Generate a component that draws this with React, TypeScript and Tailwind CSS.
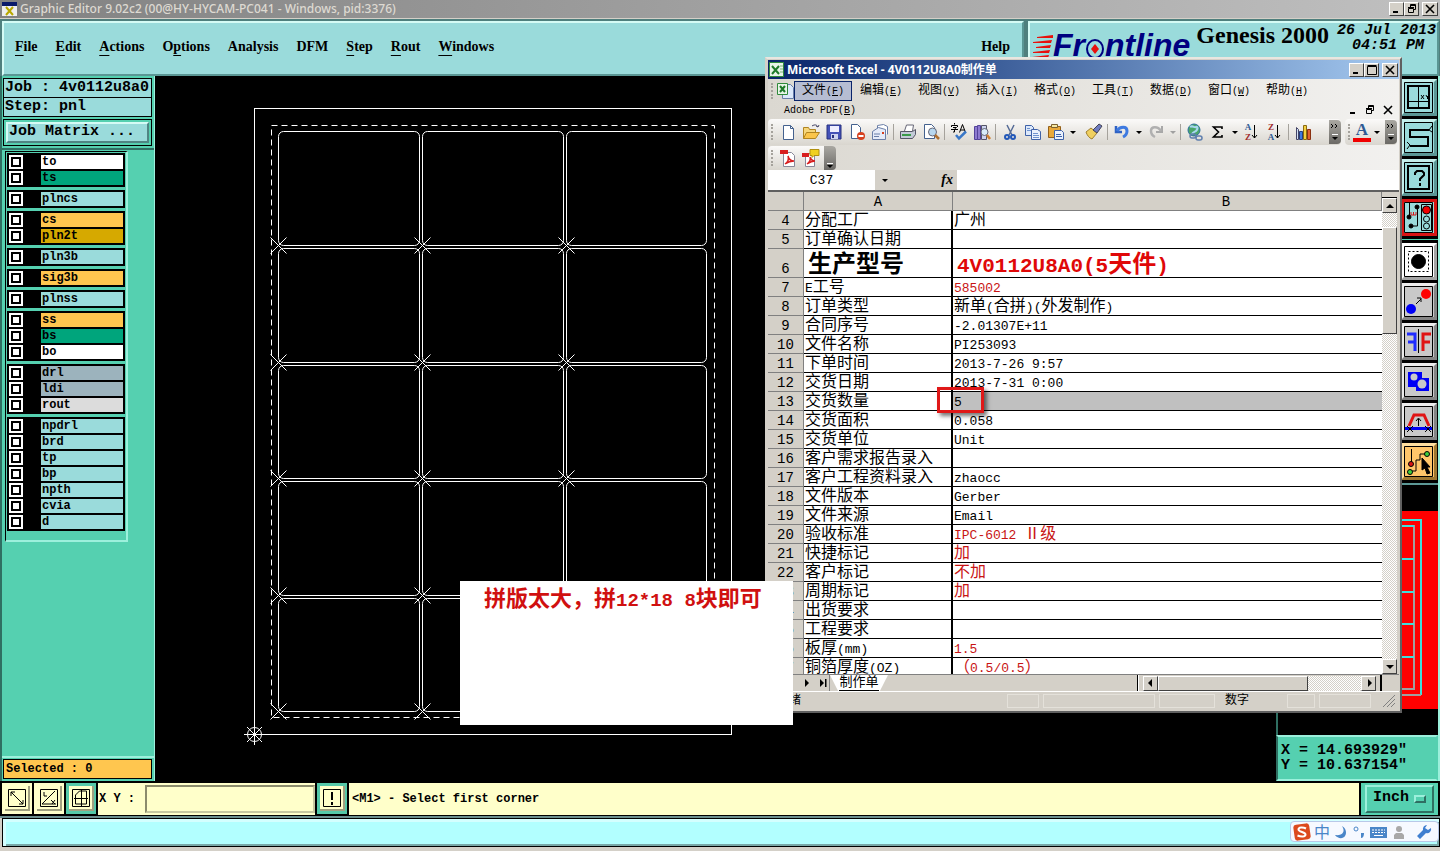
import type { ReactNode } from 'react';
import clsx from 'clsx';

const mono = "font-['Liberation_Mono','Noto_Sans_CJK_SC',monospace]";
const sans = "font-['Noto_Sans','Noto_Sans_CJK_SC',sans-serif]";
const serif = "font-['Liberation_Serif',serif]";

const winButton =
  'flex items-center justify-center border border-t-white border-l-white border-r-[#404040] border-b-[#404040] bg-[#d4d0c8] text-black';
const dither = 'bg-[repeating-conic-gradient(#fff_0_25%,#d4d0c8_0_50%)] bg-[length:2px_2px]';

/* Latin runs are set smaller so that they take half the width of a CJK glyph. */
function Mixed({ text, latin }: { text: string; latin: string }) {
  return (
    <>
      {text.split(/([\x20-\x7e]+)/).map((part, i) =>
        i % 2 === 1 ? (
          <span key={i} className={clsx('leading-2 whitespace-pre', latin)}>
            {part}
          </span>
        ) : (
          part
        ),
      )}
    </>
  );
}

function MinIcon() {
  return (
    <svg width="10" height="10" viewBox="0 0 10 10">
      <path d="M1 8h5" stroke="#000" strokeWidth="2" />
    </svg>
  );
}

function MaxIcon() {
  return (
    <svg width="10" height="10" viewBox="0 0 10 10" fill="none" stroke="#000">
      <path d="M.5 1.5h9v8h-9zM.5 .5h9" />
    </svg>
  );
}

function RestoreIcon() {
  return (
    <svg width="10" height="10" viewBox="0 0 10 10" fill="none" stroke="#000">
      <path d="M3.5 3V.5h5v5H7M3 1.5h6M1.5 4.5h5v4h-5zM1 3.5h6" />
    </svg>
  );
}

function CloseIcon() {
  return (
    <svg width="10" height="10" viewBox="0 0 10 10" fill="none" stroke="#000" strokeWidth="1.6">
      <path d="M1 1l8 8M9 1L1 9" />
    </svg>
  );
}

function WindowButtons({ middle }: { middle: ReactNode }) {
  return (
    <div className="flex h-3.5 shrink-0">
      <button type="button" aria-label="Minimize" className={clsx(winButton, 'w-[15px]')}>
        <MinIcon />
      </button>
      <button type="button" aria-label="Maximize" className={clsx(winButton, 'w-[15px]')}>
        {middle}
      </button>
      <button type="button" aria-label="Close" className={clsx(winButton, 'ml-[3px] w-4')}>
        <CloseIcon />
      </button>
    </div>
  );
}

function TitleBar() {
  return (
    <header className="flex h-[19px] shrink-0 items-center gap-[3px] border-b border-[#d4d0c8] bg-linear-to-r from-[#828282] to-[#c0c0c0] pr-0.5 pl-0.5">
      <svg width="15" height="14" viewBox="0 0 15 14" className="shrink-0">
        <path d="M0 0h15v14H0z" fill="#eee" />
        <path d="M0 0h15v4H0z" fill="#0a1a6a" />
        <path d="M4 5l7 8M11 5l-7 8" stroke="#b8a800" strokeWidth="2" />
      </svg>
      <h1 className={clsx(sans, 'flex-1 text-[12px] leading-[18px] font-medium text-[#dedad2]')}>
        Graphic Editor 9.02c2 (00@HY-HYCAM-PC041 - Windows, pid:3376)
      </h1>
      <WindowButtons middle={<RestoreIcon />} />
    </header>
  );
}

const mainMenu = [
  ['', 'F', 'ile'],
  ['', 'E', 'dit'],
  ['', 'A', 'ctions'],
  ['O', 'p', 'tions'],
  ['Analysis', '', ''],
  ['DFM', '', ''],
  ['', 'S', 'tep'],
  ['', 'R', 'out'],
  ['', 'W', 'indows'],
];

const tealBevel = 'border-2 border-t-[#d5fbf5] border-l-[#d5fbf5] border-r-[#5a9694] border-b-[#5a9694]';

function FrontlineLogo() {
  return (
    <div className="flex h-10 shrink-0 items-start overflow-hidden pt-1" aria-label="Frontline">
      <svg width="21" height="36" viewBox="0 0 21 36" fill="#e8100c">
        <path d="M5 10l17-2-1 3-16 0zM1 15l19-2-1 3-18 0zM4 20l15-2-1 3-14 0zM1 25l17-2-1 3-16 0zM0 30l17-2-1 3-16 0z" />
      </svg>
      <span className="font-['Liberation_Sans',sans-serif] text-[32px] leading-9 font-bold text-[#000080] italic">
        Fr
      </span>
      <svg width="20" height="36" viewBox="0 0 20 36">
        <ellipse cx="10" cy="22" rx="8" ry="9" fill="none" stroke="#000080" strokeWidth="2" />
        <path d="M10 17l4 5-4 5-4-5z" fill="#e8100c" />
      </svg>
      <span className="font-['Liberation_Sans',sans-serif] text-[32px] leading-9 font-bold text-[#000080] italic">
        ntline
      </span>
    </div>
  );
}

function MenuRow() {
  return (
    <div className="flex h-[57px] shrink-0 bg-[#4f7f7d] pt-[2px] pr-px pl-0.5">
      <nav
        className={clsx(
          serif,
          tealBevel,
          'flex flex-1 items-center gap-[18px] bg-[#9adbdb] pb-1 pl-[11px] text-[14px] font-bold',
        )}>
        {mainMenu.map(([before, key, after]) => (
          <button key={before + key + after} type="button">
            {before}
            <u className="underline-offset-4">{key}</u>
            {after}
          </button>
        ))}
        <button type="button" className="mr-3 ml-auto">
          Help
        </button>
      </nav>
      <div className={clsx(tealBevel, 'ml-1 flex w-[411px] items-start bg-[#9adbdb] pl-0.5')}>
        <FrontlineLogo />
        <span className={clsx(serif, 'ml-1.5 text-2xl leading-6 font-bold whitespace-nowrap')}>Genesis 2000</span>
        <div
          className={clsx(
            mono,
            'mr-px ml-auto text-right text-[15px] leading-[15px] font-bold whitespace-nowrap italic',
          )}>
          <p>26 Jul 2013</p>
          <p className="pr-3">04:51 PM</p>
        </div>
      </div>
    </div>
  );
}

const cyan = 'bg-[#9adbdb]';
const layerGroups = [
  [
    { name: 'to', color: 'bg-white' },
    { name: 'ts', color: 'bg-[#00a57c]' },
  ],
  [{ name: 'plncs', color: cyan }],
  [
    { name: 'cs', color: 'bg-[#ffc64f]' },
    { name: 'pln2t', color: 'bg-[#d6a900]' },
  ],
  [{ name: 'pln3b', color: cyan }],
  [{ name: 'sig3b', color: 'bg-[#ffc64f]' }],
  [{ name: 'plnss', color: cyan }],
  [
    { name: 'ss', color: 'bg-[#ffc64f]' },
    { name: 'bs', color: 'bg-[#00a57c]' },
    { name: 'bo', color: 'bg-white' },
  ],
  [
    { name: 'drl', color: 'bg-[#9cb3bd]' },
    { name: 'ldi', color: 'bg-[#9cb3bd]' },
    { name: 'rout', color: 'bg-[#dcdcdc]' },
  ],
  ['npdrl', 'brd', 'tp', 'bp', 'npth', 'cvia', 'd'].map((name) => ({ name, color: cyan })),
];

function LayerList() {
  return (
    <div className="mt-px ml-[3px] flex w-[123px] flex-col gap-[3px] border border-r-2 border-b-2 border-t-black border-r-[#9cf0dc] border-b-[#9cf0dc] border-l-black pt-px pr-px pb-[9px] pl-px">
      {layerGroups.map((group) => (
        <div key={group[0].name} className="bg-black p-px">
          {group.map((layer) => (
            <label key={layer.name} className="flex h-4 items-stretch border-y border-black">
              <span className="ml-px flex w-3.5 items-center justify-center bg-white">
                <input type="checkbox" className="size-[10px] appearance-none border-2 border-black bg-white" />
              </span>
              <span className={clsx('mr-px ml-[18px] flex-1 pl-px text-[12px] leading-[14px] font-bold', layer.color)}>
                {layer.name}
              </span>
            </label>
          ))}
        </div>
      ))}
    </div>
  );
}

function LayerPanel() {
  return (
    <aside
      className={clsx(
        mono,
        'flex w-[155px] shrink-0 flex-col border-r border-l-2 border-r-[#9cf0dc] border-l-[#2f6f62] bg-[#55d0b0] pt-0.5',
      )}>
      <div className="mr-0.5 ml-px border border-black bg-[#9adbdb] text-[15px] leading-[18px] font-bold whitespace-nowrap">
        <p className="border-b border-black pl-px">Job : 4v0112u8a0</p>
        <p className="pl-px">Step: pnl</p>
      </div>
      <div className="mt-0.5 mr-0.5 ml-px border border-black p-[2px]">
        <button
          type="button"
          className="flex h-[21px] w-full items-center border-2 border-t-[#d5fbf5] border-r-[#4f8583] border-b-[#4f8583] border-l-[#d5fbf5] bg-[#9adbdb] pl-px text-[15px] font-bold">
          Job Matrix ...
        </button>
      </div>
      <div className="mt-0.5 flex-1 border-t-2 border-b-2 border-t-[#2f6f62] border-b-[#9cf0dc]">
        <LayerList />
      </div>
      <p className="mt-px mr-0.5 mb-0.5 ml-px border border-black bg-[#ffc64f] px-0.5 text-[12px] leading-[18px] font-bold">
        Selected : 0
      </p>
    </aside>
  );
}

const boardCols = [278.5, 422.5, 566.5];
const boardRows = [131.5, 248.5, 365.5, 481.5, 598.5];
const rowBottoms = [245.5, 362.5, 478.5, 595.5, 711.5];

function BoardDrawing() {
  return (
    <svg width="600" height="690" viewBox="155 76 600 690" fill="none" stroke="#fff" className="block">
      <rect x="254.5" y="108.5" width="477" height="626" />
      <rect x="271.5" y="125.5" width="443" height="592" strokeDasharray="6 4" />
      {boardRows.map((y, r) =>
        boardCols.map((x) => (
          <rect key={`${x}-${y}`} x={x} y={y} width={x === 566.5 ? 140 : 141} height={rowBottoms[r] - y} rx="5" />
        )),
      )}
      {rowBottoms.map((y) =>
        boardCols.map((x) => (
          <path key={`${x}-${y}`} d={`M${x - 8} ${y - 8}l16 16M${x + 8} ${y - 8}l-16 16`} />
        )),
      )}
      <circle cx="254.5" cy="734.5" r="7" />
      <path d="M244 734.5h21M254.5 724v21M247 727l15 15M262 727l-15 15" />
    </svg>
  );
}

function Tool({ label, tone, children }: { label: string; tone: string; children: ReactNode }) {
  return (
    <button
      type="button"
      aria-label={label}
      className={clsx('mb-[3px] flex h-[37px] w-9 items-center justify-center border-[3px]', tone)}>
      <svg width="30" height="31" viewBox="0 0 30 31" fill="none" stroke="#000" className="shrink-0">
        {children}
      </svg>
    </button>
  );
}

const toolTeal = 'bg-[#9adbdb] border-t-[#c4efec] border-l-[#c4efec] border-r-[#5c9896] border-b-[#5c9896]';
const toolGray = 'bg-[#c9c9c9] border-t-[#ececec] border-l-[#ececec] border-r-[#858585] border-b-[#858585]';
const toolRed = 'bg-[#9adbdb] border-[#d81414]';
const toolWhite = 'bg-white border-t-white border-l-white border-r-[#a5a5a5] border-b-[#a5a5a5]';
const toolAmber = 'bg-[#ffc66a] border-t-[#ffdf9f] border-l-[#ffdf9f] border-r-[#a07830] border-b-[#a07830]';

function ToolColumn() {
  return (
    <div className="flex w-[38px] flex-col self-end bg-black pt-[3px] pl-px">
      <Tool label="Coordinates" tone={toolTeal}>
        <path d="M.5.5h28v30H.5z" />
        <path d="M4 4h21v22H4z" strokeWidth="2" />
        <path d="M14.5 4v22M4 19.5h21M17 13l3 4M20 13l-3 4M22 13l1 2 2-2M23.5 15v2" />
      </Tool>
      <Tool label="Trace" tone={toolTeal}>
        <path d="M.5.5h28v30H.5zM28 4l-3 4 3 2M3 20l3 3-3 4" />
        <path d="M25 8H6v7h18v9H6" strokeWidth="2" />
      </Tool>
      <Tool label="Help" tone={toolTeal}>
        <path d="M.5.5h28v30H.5z" />
        <path d="M4 4h21v23H4zM11 13v-2l2-2h5l2 2v2l-4 4v2M16 21v3" strokeWidth="2" />
      </Tool>
      <Tool label="Net state" tone={toolRed}>
        <path d="M.5.5h28v30H.5z" />
        <path d="M5.500 1v14M13.500 5v19H8M17.500 2.500h10v26h-10z" />
        <g fill="#000">
          <circle cx="5" cy="15" r="2" />
          <circle cx="13" cy="5" r="2" />
          <circle cx="7" cy="24" r="2" />
        </g>
        <path d="M7 13h5M7 13v-3M9.500 13v-3M12 13v-3" stroke="#d81414" />
        <circle cx="22.500" cy="8" r="4" fill="#f00000" />
        <circle cx="22.500" cy="17" r="3" />
        <circle cx="22.500" cy="24" r="3" />
      </Tool>
      <div className="mb-[3px] h-px bg-[#55d0b0]" />
      <Tool label="Pad" tone={toolWhite}>
        <path d="M.5.5h28v30H.5z" />
        <path d="M4.500 5.500h20v20h-20z" strokeDasharray="2 2" />
        <circle cx="14.500" cy="15.500" r="7" fill="#000" />
      </Tool>
      <Tool label="Move" tone={toolGray}>
        <path d="M.5.5h28v30H.5zM12 18l5-5M17 16v-4h-4" />
        <circle cx="22" cy="8" r="5" fill="#f00" stroke="none" />
        <circle cx="7" cy="23" r="5" fill="#0000f5" stroke="none" />
      </Tool>
      <Tool label="Mirror" tone={toolGray}>
        <path d="M.5.5h28v30H.5zM14.500 3v24" />
        <path d="M3 8h8v17M4 16h7" stroke="#1f2bff" strokeWidth="3" />
        <path d="M27 8h-8v17M26 16h-7" stroke="#e01414" strokeWidth="3" />
      </Tool>
      <Tool label="Contour" tone={toolGray}>
        <path d="M.5.5h28v30H.5z" />
        <path d="M4 6h14v6h7v13H12v-4H4z" fill="#0000f5" stroke="none" />
        <circle cx="10" cy="11" r="3.500" fill="#c9c9c9" stroke="none" />
        <circle cx="18" cy="18" r="4.500" fill="#c9c9c9" stroke="none" />
      </Tool>
      <Tool label="Reshape" tone={toolGray}>
        <path d="M.5.5h28v30H.5z" />
        <path d="M1 22.500h27" stroke="#0000f5" strokeWidth="3" />
        <path d="M5 20l5-11h10l5 11" stroke="#e01414" strokeWidth="3" />
        <path d="M14.500 20v-7M12 15l2.500-3 2.500 3M3 20l6 6M9 20l-6 6M21 20l6 6M27 20l-6 6" />
      </Tool>
      <Tool label="Select net" tone={toolAmber}>
        <path d="M.5.5h28v30H.5zM7.500 3v16M6 25h6v-11h4V8h6" />
        <circle cx="7" cy="18" r="2.500" fill="#d81414" />
        <circle cx="6" cy="26" r="2.500" fill="#3ecf3e" />
        <circle cx="23" cy="8" r="2.500" fill="#3ecf3e" />
        <path d="M18 12l8 9h-3l3 6-3 1-2-6-3 2z" fill="#000" />
      </Tool>
      <div className="h-0.5 bg-[#5c9896]" />
    </div>
  );
}

function Overview() {
  return (
    <div className="flex flex-1 flex-col justify-end border-l-2 border-[#2f6f62] bg-black pb-[26px]">
      <svg
        width="100%"
        height="198"
        viewBox="0 0 158 198"
        preserveAspectRatio="xMaxYMin meet"
        className="bg-[#f00]">
        <g fill="none" strokeWidth="2">
          <path d="M20 9h121v175" stroke="#3fe0dc" />
          <path d="M141 184H20" stroke="#a0a0a0" />
          <path d="M20 15h114v163H20" stroke="#a0a0a0" />
          <path d="M20 15h114M20 48h114M20 81h114M20 113h114M20 146h114" stroke="#3fe0dc" />
        </g>
      </svg>
    </div>
  );
}

function RightPanel() {
  return (
    <aside className="flex w-[164px] shrink-0 flex-col border-r-2 border-[#9cf0dc]">
      <ToolColumn />
      <Overview />
      <div
        className={clsx(
          mono,
          'border-2 border-t-[#9cf0dc] border-r-[#55d0b0] border-b-[#9cf0dc] border-l-[#2f6f62] bg-[#55d0b0] px-[3px] pt-1.5 pb-1.5 text-[15px] leading-[15px] font-bold',
        )}>
        <p>X = 14.693929"</p>
        <p>Y = 10.637154"</p>
      </div>
    </aside>
  );
}

function PromptButton({ label, active, children }: { label: string; active?: boolean; children: ReactNode }) {
  return (
    <button
      type="button"
      aria-label={label}
      className={clsx('flex h-[31px] w-[30px] items-center justify-center', active ? 'bg-[#55c8a8]' : 'bg-[#ffffca]')}>
      <svg width="25" height="25" viewBox="0 0 25 25" fill="none" stroke="#000">
        <path d="M0 0h25v25H0z" fill="#ffffca" stroke="none" />
        <path d="M24 0v24H0" stroke="#a0a080" strokeWidth="2" />
        <path d="M3.500 3.500h17v17h-17z" />
        {children}
      </svg>
    </button>
  );
}

function PromptRow() {
  return (
    <form
      className={clsx(
        mono,
        'flex h-[35px] shrink-0 items-center gap-0.5 bg-black pt-px pr-0.5 pb-px pl-0.5 text-[12px] font-bold',
      )}>
      <PromptButton label="Stretch">
        <path d="M6 6l12 12M6 10V6h4M18 14v4h-4" />
      </PromptButton>
      <PromptButton label="Angle">
        <path d="M5 18L18 5M5 18h14M7 6v4h3M14 14l4 4M15 18l3-4" />
      </PromptButton>
      <PromptButton label="Grid" active>
        <path d="M6.500 18V9l4-4h7v13zM12.500 4v16M5 12.500h14" />
      </PromptButton>
      <div className="flex h-8 items-center bg-[#ffffca] pl-px">
        <label htmlFor="coords" className="w-[46px]">
          X Y :
        </label>
        <input
          id="coords"
          className="h-[28px] w-[170px] border-2 border-t-[#8c8c6c] border-r-[#c8c8a0] border-b-[#c8c8a0] border-l-[#8c8c6c] bg-[#ffffca] px-1"
        />
      </div>
      <PromptButton label="Alert" active>
        <path d="M12 6v8M12 16v3" strokeWidth="2" />
      </PromptButton>
      <output className="flex h-8 flex-1 items-center bg-[#ffffca] pl-[3px]">{'<M1> - Select first corner'}</output>
      <div className="flex h-8 w-[77px] items-center justify-center bg-[#55d0b0]">
        <button
          type="button"
          className="flex h-[28px] w-[69px] items-center justify-between border-2 border-t-[#9cf0dc] border-r-[#2f6f62] border-b-[#2f6f62] border-l-[#9cf0dc] px-1.5 text-[15px]">
          Inch
          <span className="h-2 w-3 border-2 border-t-[#9cf0dc] border-r-[#2f6f62] border-b-[#2f6f62] border-l-[#9cf0dc]" />
        </button>
      </div>
    </form>
  );
}

function InputTray() {
  return (
    <div className="flex h-[21px] items-center gap-[3px] rounded-sm border border-[#b8c8e8] bg-[#f6f9ff] pr-1.5 pl-0.5 text-[#4a86c8]">
      <svg width="18" height="18" viewBox="0 0 18 18">
        <rect x="1" y="1" width="16" height="16" rx="3" fill="#dc4a1e" transform="rotate(-8 9 9)" />
        <path
          d="M13 5.500C10 4 5.500 4 5.500 6.500S12.500 9 12.500 11.500 8 14 4.500 12.500"
          fill="none"
          stroke="#fff"
          strokeWidth="2"
        />
      </svg>
      <span className={clsx(sans, 'text-[16px] leading-none')}>中</span>
      <svg width="80" height="18" viewBox="0 0 80 18" fill="#4a86c8">
        <path d="M9 3c4 6 0 10-7 9 3 4 8 4 10 1s1-8-3-10z" />
        <circle cx="23" cy="6" r="2" fill="none" stroke="#4a86c8" />
        <path d="M28 10h3c0 3-1 5-3 5z" />
        <rect x="37" y="4" width="17" height="11" />
        <path d="M39 7h13M39 9.500h13" stroke="#fff" strokeDasharray="2 1" />
        <path d="M41 12.500h9" stroke="#fff" />
        <g fill="#a8a8a8">
          <circle cx="66" cy="6" r="3" />
          <path d="M61 16v-4l2-2h6l2 2v4z" />
        </g>
      </svg>
      <svg width="16" height="16" viewBox="0 0 16 16">
        <path d="M11 1a4 4 0 0 0-4 5l-6 6 3 3 6-6a4 4 0 0 0 5-5l-3 2-3-2z" fill="#3f7fd0" />
      </svg>
    </div>
  );
}

function BottomBar() {
  return (
    <footer className="shrink-0 border-t-2 border-[#6c8f8f] bg-[#d4d0c8] pb-1">
      <div className="ml-0.5 flex h-[29px] items-center justify-end border border-black bg-[#b2ffff] pb-0.5 shadow-[inset_3px_3px_0_#d4ffff,inset_-2px_-2px_0_#7aa8a8]">
        <InputTray />
      </div>
    </footer>
  );
}

/* ---------- spreadsheet window ---------- */

const sheetMenu = ['文件(F)', '编辑(E)', '视图(V)', '插入(I)', '格式(O)', '工具(T)', '数据(D)', '窗口(W)', '帮助(H)'];

function MenuLabel({ text }: { text: string }) {
  const [name, key] = text.split(/[()]/);
  return (
    <>
      <Mixed text={name} latin="text-[10px]" />
      <span className="text-[10px] leading-none">
        (<u>{key}</u>)
      </span>
    </>
  );
}

function Grip() {
  return <span className="mx-[3px] h-4 w-0.5 shrink-0 self-center border-l-2 border-dotted border-[#a5a29c]" />;
}

function Separator() {
  return <span className="mx-[2px] h-4 w-px shrink-0 bg-[#a5a29c]" />;
}

function Caret({ muted, className }: { muted?: boolean; className?: string }) {
  return (
    <svg width="11" height="20" viewBox="0 0 11 20" className={clsx('shrink-0', className)}>
      <path d="M3 9h6l-3 3z" fill={muted ? '#a0a0a0' : '#000'} />
    </svg>
  );
}

function Icon({ label, children }: { label: string; children: ReactNode }) {
  return (
    <button type="button" aria-label={label} className="flex h-5 w-[23px] shrink-0 items-center justify-center">
      <svg width="18" height="18" viewBox="0 0 18 18" fill="none">
        {children}
      </svg>
    </button>
  );
}

function Overflow() {
  return (
    <button
      type="button"
      aria-label="More buttons"
      className="flex h-6 w-3 shrink-0 items-center justify-center rounded-r bg-linear-to-b from-[#aaa8a2] to-[#6c6a66]">
      <svg width="10" height="20" viewBox="0 0 10 20">
        <path d="M1 2l2 2-2 2M5 2l2 2-2 2" stroke="#000" fill="none" />
        <path d="M2 12.500h6" stroke="#fff" />
        <path d="M2 15h6l-3 3z" fill="#000" />
      </svg>
    </button>
  );
}

type SortIconProps = { first: string; second: string; firstColor: string; secondColor: string };

function SortIcon({ first, second, firstColor, secondColor }: SortIconProps) {
  return (
    <button
      type="button"
      aria-label={`Sort ${first} to ${second}`}
      className={clsx(
        serif,
        'flex h-5 w-[23px] shrink-0 items-center justify-center text-[9px] leading-[10px] font-bold',
      )}>
      <span className="flex flex-col">
        <span className={firstColor}>{first}</span>
        <span className={secondColor}>{second}</span>
      </span>
      <svg width="7" height="16" viewBox="0 0 7 16" fill="none" stroke="#000">
        <path d="M3.500 1v13M1 11l2.500 3L6 11" />
      </svg>
    </button>
  );
}

const page = 'M4.500 2.500h7l3 3v11h-10z';

function StandardToolbar() {
  return (
    <div className="flex h-[26px] items-center pr-0.5">
      <div className="flex h-full flex-1 items-center rounded bg-linear-to-b from-[#fbfaf9] to-[#d9d6cf]">
        <Grip />
        <Icon label="New">
          <path d={page} fill="#fff" stroke="#44618e" />
          <path d="M11.500 2.500v3h3" stroke="#44618e" />
        </Icon>
        <Icon label="Open">
          <path d="M1.500 15.500v-11h5l1 2h6v3" fill="#f6d67a" stroke="#b08420" />
          <path d="M1.500 15.500l3-6h13l-4 6z" fill="#fbc54a" stroke="#b08420" />
          <path d="M10 3c3-2 5-1 6 1l1-2M16 4l-2-1" stroke="#446" />
        </Icon>
        <Icon label="Save">
          <path d="M2 2h14v14H2z" fill="#4452b8" stroke="#27307e" />
          <path d="M5 3h9v6H5z" fill="#eef" />
          <path d="M6 11h7v5H6z" fill="#cdd3ee" />
          <path d="M7 12h2v3H7z" fill="#27307e" />
        </Icon>
        <Icon label="Permission">
          <path d="M3.500 1.500h6l3 3v11h-9z" fill="#fff" stroke="#44618e" />
          <circle cx="13" cy="13" r="4" fill="#d6401e" />
          <path d="M10.500 13h5" stroke="#fff" strokeWidth="2" />
        </Icon>
        <Icon label="Mail">
          <path d="M6.500 7.500v-5l6-1 4 2v8" fill="#fff" stroke="#6b7fa8" />
          <path d="M1.500 8.500l6-4 7 2v10h-13z" fill="#e5ebf8" stroke="#6b7fa8" />
          <path d="M3 11h6M3 13.500h5" stroke="#6b7fa8" />
          <path d="M11 9h2v2h-2z" fill="#d6401e" />
        </Icon>
        <Separator />
        <Icon label="Print">
          <path d="M5.500 8l2-6h7l-1 6" fill="#fff" stroke="#667" />
          <path d="M1.500 8.500h12l3-2v5l-3 4h-12z" fill="#c3cbd8" stroke="#556" />
          <path d="M3 12h9" stroke="#3a9a4a" strokeWidth="2" />
        </Icon>
        <Icon label="Preview">
          <path d="M2.500 1.500h7l3 3v11h-10z" fill="#fff" stroke="#44618e" />
          <circle cx="10.500" cy="9" r="4" fill="#b8d8f0" stroke="#667" />
          <path d="M13 12l4 4" stroke="#b07030" strokeWidth="2.500" />
        </Icon>
        <Separator />
        <Icon label="Spelling">
          <path d="M4.500 0v1.500M1.500 4V2.500h6V4M3 4.500h3.500L4.500 6v3H3M1 6.500h7M9.500 9.500l3-8 3 8M10.500 7h4" stroke="#000" />
          <path d="M6 12l3 3.500 7-7" stroke="#3a78c8" strokeWidth="2.500" />
        </Icon>
        <Icon label="Research">
          <path d="M1.500 3.500h3v13h-3zM4.500 2.500h3v14h-3z" fill="#8e7ad0" stroke="#54449a" />
          <path d="M8.500 2.500h5v14h-5z" fill="#cdd3ee" stroke="#556" />
          <circle cx="11.500" cy="9" r="3.500" fill="#d8ecf8" stroke="#667" />
          <path d="M14 12l3 4" stroke="#d08030" strokeWidth="2.500" />
        </Icon>
        <Separator />
        <Icon label="Cut">
          <path d="M6 2l5 10M13 2L8 12" stroke="#556b96" strokeWidth="1.500" />
          <circle cx="6" cy="14" r="2" stroke="#2358b8" strokeWidth="2" />
          <circle cx="12" cy="14" r="2" stroke="#2358b8" strokeWidth="2" />
        </Icon>
        <Icon label="Copy">
          <path d="M1.500 2.500h6l2 2v8h-8z" fill="#dce8fa" stroke="#3f62a8" />
          <path d="M7.500 6.500h6l3 2v8h-9z" fill="#eaf1fd" stroke="#3f62a8" />
          <path d="M9 10.500h5M9 12.500h6M9 14.500h6M3 5.500h3M3 7.500h4" stroke="#6f93cf" />
        </Icon>
        <Icon label="Paste">
          <path d="M1.500 3.500h12v11h-12z" fill="#e8a83a" stroke="#94601a" />
          <path d="M4.500 1.500h6v3h-6z" fill="#f5e7a0" stroke="#7a6030" />
          <path d="M7.500 7.500h7l2 2v7h-9z" fill="#eaf1fd" stroke="#3f62a8" />
          <path d="M9 11.500h5M9 13.500h6" stroke="#3f62a8" />
        </Icon>
        <Caret className="mr-1" />
        <Icon label="Format painter">
          <path d="M1 9l5-4 6 5-5 6c-3-1-5-4-6-7z" fill="#f0d060" stroke="#a08030" />
          <path d="M8 7l6-6 3 2-5 7z" fill="#6f7cc0" stroke="#445" />
        </Icon>
        <Separator />
        <Icon label="Undo">
          <path d="M3 3v6h6" stroke="#2f62c4" strokeWidth="2.500" />
          <path d="M4 8c3-5 10-5 10 0 0 3-2 5-4 6" stroke="#3f7ae0" strokeWidth="3" />
        </Icon>
        <Caret />
        <Icon label="Redo">
          <path d="M15 3v6H9" stroke="#a8a8a8" strokeWidth="2" />
          <path d="M14 8C11 3 4 3 4 8c0 3 2 5 4 6" stroke="#b0b0b0" strokeWidth="2.500" />
        </Icon>
        <Caret muted />
        <Separator />
        <Icon label="Hyperlink">
          <circle cx="8" cy="7" r="6" fill="#4aa66a" stroke="#2c6f9c" />
          <path d="M4 4c3-2 4 1 6 0s2 3 0 4-3 1-4 3" stroke="#a8d8f0" strokeWidth="2" />
          <rect x="4" y="11" width="6" height="4" rx="2" stroke="#5f7fae" strokeWidth="1.500" />
          <rect x="10" y="13" width="6" height="4" rx="2" stroke="#5f7fae" strokeWidth="1.500" />
        </Icon>
        <Icon label="Sum">
          <path d="M13 6V4H4.500l5 5-5 5H13v-2" stroke="#000" strokeWidth="1.600" />
        </Icon>
        <Caret />
        <SortIcon first="A" second="Z" firstColor="text-[#2f5a94]" secondColor="text-[#a02c2c]" />
        <SortIcon first="Z" second="A" firstColor="text-[#a02c2c]" secondColor="text-[#2f5a94]" />
        <Separator />
        <Icon label="Chart">
          <path d="M2.500 4.500v12h2l0-10z" fill="#cfe0f5" stroke="#446" />
          <path d="M5.500 8.500h3v8h-3z" fill="#3f7ae0" stroke="#27407e" />
          <path d="M9.500 2.500h3v14h-3z" fill="#f5d040" stroke="#8a6a10" />
          <path d="M13.500 6.500h3v10h-3z" fill="#e06030" stroke="#8a3010" />
        </Icon>
        <span className="flex-1" />
        <Overflow />
      </div>
      <div className="ml-1 flex h-full items-center rounded bg-linear-to-b from-[#fbfaf9] to-[#d9d6cf]">
        <Grip />
        <button
          type="button"
          aria-label="Font color"
          className={clsx(serif, 'h-5 w-[18px] border-b-4 border-[#f00000] text-[17px] leading-4 font-bold text-[#2f5a94]')}>
          A
        </button>
        <Caret className="mr-[3px]" />
        <Overflow />
      </div>
    </div>
  );
}

function PdfToolbar() {
  return (
    <div className="flex h-[25px] items-center">
      <div className="flex h-6 items-center rounded bg-linear-to-b from-[#fbfaf9] to-[#d9d6cf]">
        <Grip />
        <Icon label="Convert to PDF">
          <path d="M4.500 3.500h8l3 3v11h-11z" fill="#fff" stroke="#889" />
          <path d="M1 1h8v4H1z" fill="#d81e1e" />
          <path d="M6 15c3-2 4-5 3-8 1 4 3 5 6 5-4 0-6 1-9 3z" stroke="#d81e1e" strokeWidth="1.500" />
        </Icon>
        <Icon label="Convert and review">
          <path d="M3.500 4.500h9v13h-9z" fill="#fff" stroke="#889" />
          <path d="M0 4h7v4H0z" fill="#d81e1e" />
          <path d="M5 15c3-2 4-4 3-7 1 3 3 4 5 4-3 0-5 1-8 3z" stroke="#d81e1e" strokeWidth="1.500" />
          <path d="M8 .5h9v6h-5l-2 2v-2H8z" fill="#f0d020" stroke="#b09010" />
        </Icon>
        <span className="ml-0.5 flex h-6 w-3 items-end justify-center rounded-r bg-linear-to-b from-[#aaa8a2] to-[#6c6a66]">
          <svg width="8" height="8" viewBox="0 0 8 8">
            <path d="M1 1.500h6" stroke="#fff" />
            <path d="M1 3h6l-3 3z" fill="#000" />
          </svg>
        </span>
      </div>
    </div>
  );
}

const rows = [
  { n: 4, label: '分配工厂', value: '广州' },
  { n: 5, label: '订单确认日期', value: '' },
  { n: 6, label: '生产型号', value: '4V0112U8A0(5天件)', big: true, red: true },
  { n: 7, label: 'E工号', value: '585002', red: true },
  { n: 8, label: '订单类型', value: '新单(合拼)(外发制作)' },
  { n: 9, label: '合同序号', value: '-2.01307E+11' },
  { n: 10, label: '文件名称', value: 'PI253093' },
  { n: 11, label: '下单时间', value: '2013-7-26 9:57' },
  { n: 12, label: '交货日期', value: '2013-7-31 0:00' },
  { n: 13, label: '交货数量', value: '5', active: true },
  { n: 14, label: '交货面积', value: '0.058' },
  { n: 15, label: '交货单位', value: 'Unit' },
  { n: 16, label: '客户需求报告录入', value: '' },
  { n: 17, label: '客户工程资料录入', value: 'zhaocc' },
  { n: 18, label: '文件版本', value: 'Gerber' },
  { n: 19, label: '文件来源', value: 'Email' },
  { n: 20, label: '验收标准', value: 'IPC-6012 Ⅱ级', red: true },
  { n: 21, label: '快捷标记', value: '加', red: true },
  { n: 22, label: '客户标记', value: '不加', red: true },
  { n: 23, label: '周期标记', value: '加', red: true },
  { n: 24, label: '出货要求', value: '' },
  { n: 25, label: '工程要求', value: '' },
  { n: 26, label: '板厚(mm)', value: '1.5', red: true },
  { n: 27, label: '铜箔厚度(OZ)', value: '（0.5/0.5）', red: true },
];

const headCell = 'border-r border-b border-[#808080] bg-[#d4d0c8] align-bottom leading-4 font-normal';
const bigCell = 'pt-[5px] pl-1 text-[24px] leading-[23px] font-bold';
const plainCell = 'pt-[3px] pl-px leading-[15px]';

function Sheet() {
  return (
    <table className="w-full table-fixed border-separate border-spacing-0 text-[16px] whitespace-nowrap">
      <colgroup>
        <col className="w-[36px]" />
        <col className="w-[149px]" />
        <col />
      </colgroup>
      <thead>
        <tr className="h-[19px] text-[14px]">
          <th className={clsx(headCell, 'p-0')} />
          <th className={clsx(headCell, 'p-0')}>A</th>
          <th className={clsx(headCell, 'p-0 pl-[118px]')}>B</th>
        </tr>
      </thead>
      <tbody>
        {rows.map((row) => (
          <tr key={row.n} className={row.big ? 'h-[29px]' : 'h-[19px]'}>
            <th scope="row" className={clsx(headCell, 'p-0 text-[14px]')}>
              {row.n}
            </th>
            <td className={clsx('border-r-2 border-b border-black align-top', row.big ? bigCell : plainCell)}>
              <Mixed text={row.label} latin="text-[13px]" />
            </td>
            <td
              className={clsx(
                'border-b border-black align-top',
                row.big ? bigCell : plainCell,
                row.red && (row.big ? 'text-[#e00808]' : 'text-[#c81414]'),
                row.active && 'bg-[#c0c0c0]',
              )}>
              <Mixed text={row.value} latin={row.big ? 'text-[21px]' : 'text-[13px]'} />
            </td>
          </tr>
        ))}
      </tbody>
    </table>
  );
}

function ArrowButton({ label, d }: { label: string; d: string }) {
  return (
    <button type="button" aria-label={label} className={clsx(winButton, 'size-[15px] shrink-0')}>
      <svg width="8" height="8" viewBox="0 0 8 8">
        <path d={d} />
      </svg>
    </button>
  );
}

function TabStrip() {
  return (
    <div className="flex h-[17px] items-center border-t border-[#808080] bg-[#d4d0c8]">
      <svg width="62" height="16" viewBox="0 0 62 16" className="shrink-0">
        <path d="M6 4v8M12 4l-4 4 4 4zM25 4l-4 4 4 4zM37 4l4 4-4 4zM52 4l4 4-4 4zM57 4h1.500v8H57z" />
        <path d="M61.500 0v16" stroke="#808080" />
      </svg>
      <button
        type="button"
        className="h-4 w-[58px] bg-white text-[13px] leading-4 [clip-path:polygon(0_0,100%_0,86%_100%,14%_100%)]">
        <span className="border-b border-black">制作单</span>
      </button>
      <span className="flex-1" />
      <span className="mr-1 h-4 w-0.5 border-l border-black bg-white" />
      <ArrowButton label="Scroll left" d="M5 0v8L1 4z" />
      <div className={clsx(dither, 'h-[15px] w-[203px]')}>
        <div className={clsx(winButton, 'h-full w-[150px]')} />
      </div>
      <ArrowButton label="Scroll right" d="M3 0v8l4-4z" />
      <span className="mr-[17px] ml-1 h-4 w-0.5 bg-black" />
    </div>
  );
}

function SpreadsheetWindow() {
  return (
    <section
      className={clsx(
        mono,
        'absolute top-[57px] right-[38px] z-10 w-[637px] border-2 border-t-[#e8e6e0] border-r-[#606060] border-b-[#606060] border-l-[#d4d0c8] bg-[#d4d0c8] p-px',
      )}>
      <header className="flex h-[19px] items-center gap-[3px] bg-linear-to-r from-[#0a246a] to-[#a6caf0] px-px">
        <svg width="15" height="15" viewBox="0 0 15 15" className="shrink-0">
          <path d="M.5.500h14v14H.5z" fill="#e8f4e8" stroke="#2f8a3a" />
          <path d="M3 4l7 8M10 4l-7 8" stroke="#1f7a2a" strokeWidth="2" />
          <path d="M11 4h3M11 7h3M11 10h3" stroke="#7ab07a" />
        </svg>
        <h2 className={clsx(sans, 'flex-1 text-[12px] leading-[18px] font-bold text-white')}>
          Microsoft Excel - 4V0112U8A0制作单
        </h2>
        <WindowButtons middle={<MaxIcon />} />
      </header>
      <div className="bg-linear-to-r from-[#dbd8d1] to-[#f2f1ef]">
        <nav className="flex items-center pt-0.5 text-[12px] leading-[18px]">
          <Grip />
          <svg width="18" height="18" viewBox="0 0 18 18" className="shrink-0">
            <path d="M6.500 2.500h8l3 3v11h-11z" fill="#dce8fa" stroke="#6b7fa8" />
            <path d="M1.500 1.500h10v11h-10z" fill="#e8f4e8" stroke="#2f8a3a" />
            <path d="M4 4l5 6M9 4l-5 6" stroke="#1f7a2a" strokeWidth="2" />
          </svg>
          {sheetMenu.map((item, i) => (
            <button
              key={item}
              type="button"
              className={clsx('w-[58px] border', i === 0 ? 'border-[#0a246a] bg-[#b6bdd2]' : 'border-transparent')}>
              <MenuLabel text={item} />
            </button>
          ))}
        </nav>
        <div className="flex h-[18px] items-center pr-1.5 pl-4 text-[12px]">
          <button type="button">
            <MenuLabel text="Adobe PDF(B)" />
          </button>
          <div className="ml-auto flex gap-1.5">
            <button type="button" aria-label="Minimize workbook">
              <MinIcon />
            </button>
            <button type="button" aria-label="Restore workbook">
              <RestoreIcon />
            </button>
            <button type="button" aria-label="Close workbook" className="ml-0.5">
              <CloseIcon />
            </button>
          </div>
        </div>
        <StandardToolbar />
        <PdfToolbar />
      </div>
      <div className="flex h-[20px] items-stretch">
        <input
          aria-label="Name box"
          defaultValue="C37"
          className="w-[107px] bg-white pt-0.5 text-center text-[13px] leading-4"
        />
        <Caret className="ml-1" />
        <span className={clsx(serif, 'mr-1 ml-auto text-[14px] leading-5 font-bold italic')}>fx</span>
        <input aria-label="Formula" className="w-[442px] bg-white" />
      </div>
      <div className="flex h-[484px] border-t-2 border-[#606060] pr-0.5">
        <div className="min-w-0 flex-1 overflow-hidden bg-white">
          <Sheet />
        </div>
        <div className={clsx(dither, 'flex w-[15px] flex-col')}>
          <span className="h-1.5 border-b border-black bg-[#d4d0c8]" />
          <ArrowButton label="Scroll up" d="M0 6h8L4 2z" />
          <div className={clsx(winButton, 'mt-3.5 h-[107px]')} />
          <span className="flex-1" />
          <ArrowButton label="Scroll down" d="M0 2h8L4 6z" />
        </div>
      </div>
      <TabStrip />
      <footer className="flex h-[19px] items-center justify-end gap-1 border-t border-white pr-1 text-[12px]">
        <span className="mr-auto pl-[9px]">就绪</span>
        <span className="h-3.5 w-8 border border-[#e4e1da]" />
        <span className="h-3.5 w-28 border border-[#e4e1da]" />
        <span className="h-3.5 w-14 border border-[#e4e1da]" />
        <span className="h-4 w-16 pl-1.5 leading-4">数字</span>
        <span className="h-3.5 w-7 border border-[#e4e1da]" />
        <span className="h-3.5 w-[52px] border border-[#e4e1da]" />
        <svg width="12" height="12" viewBox="0 0 12 12" stroke="#808080" className="ml-2">
          <path d="M0 12L12 0M4 12l8-8M8 12l4-4" />
        </svg>
      </footer>
    </section>
  );
}

export default function App() {
  return (
    <div className="relative flex min-h-screen flex-col bg-black text-black">
      <TitleBar />
      <MenuRow />
      <main className="flex flex-1">
        <LayerPanel />
        <div className="min-w-0 flex-1 overflow-hidden bg-black">
          <BoardDrawing />
        </div>
        <RightPanel />
      </main>
      <PromptRow />
      <BottomBar />
      <SpreadsheetWindow />
      <div className="absolute top-[387px] right-[456px] z-20 h-[26px] w-[47px] border-[3px] border-[#e01818] shadow-[3px_3px_4px_#0008]" />
      <p
        className={clsx(
          mono,
          'absolute top-[581px] right-[647px] z-20 h-36 w-[333px] bg-white pt-1.5 pl-6 text-[22px] leading-7 font-bold whitespace-nowrap text-[#d01010]',
        )}>
        <Mixed text="拼版太大，拼12*18 8块即可" latin="text-[19px]" />
      </p>
    </div>
  );
}
